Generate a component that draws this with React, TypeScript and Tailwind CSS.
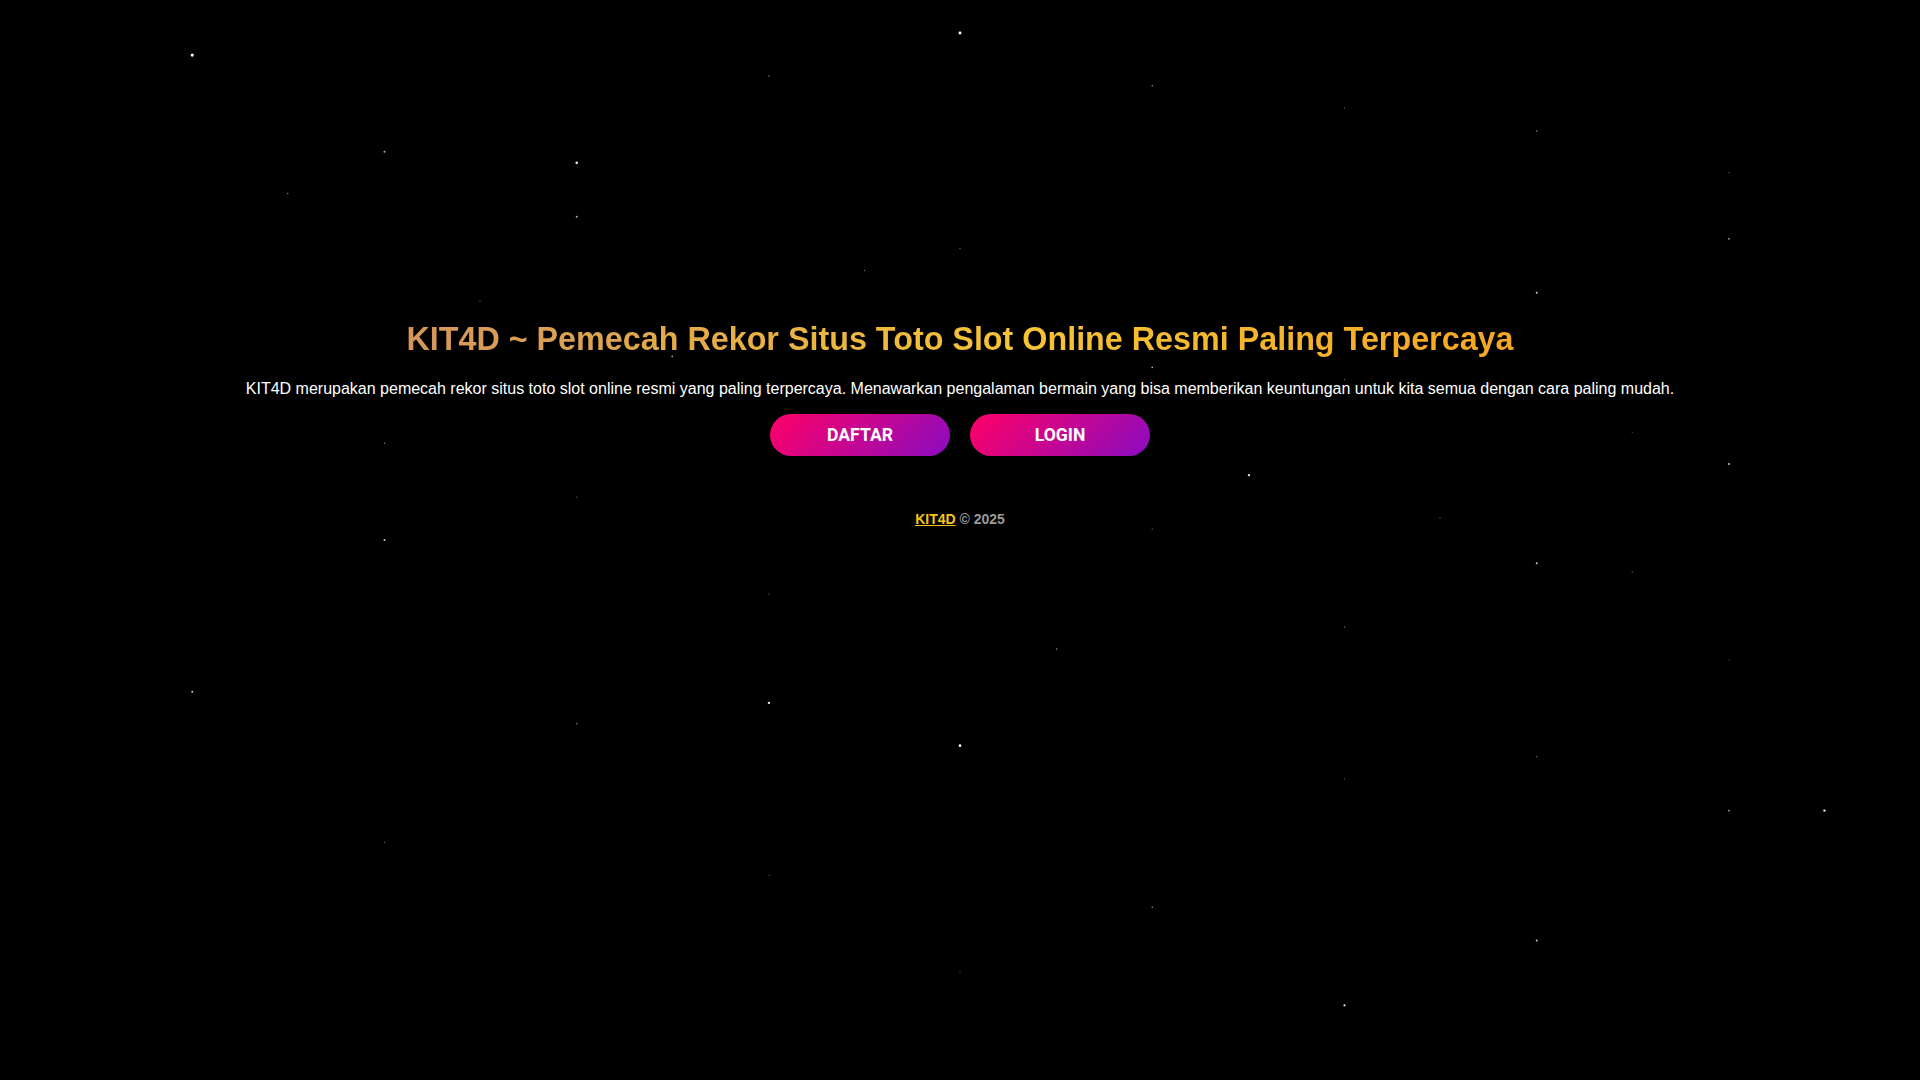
import React from "react";

const stars: [number, number, number, number][] = [
  [157, 45, 1.3, 1], [314, 124, 0.8, 0.7], [471, 133, 1.1, 0.9], [235, 158, 0.6, 0.5], [471, 177, 0.8, 0.7],
  [628, 62, 0.6, 0.5], [784, 27, 1.2, 1], [941, 70, 0.6, 0.6], [1098, 88, 0.5, 0.5], [1255, 107, 0.6, 0.6],
  [1412, 141, 0.5, 0.4], [1412, 195, 0.7, 0.7], [1255, 239, 0.8, 0.8], [784, 203, 0.5, 0.5], [706, 221, 0.6, 0.5],
  [392, 246, 0.5, 0.4], [549, 291, 0.7, 0.7], [941, 300, 0.7, 0.7], [1098, 310, 0.5, 0.5], [314, 362, 0.6, 0.5],
  [1020, 388, 1, 0.9], [1412, 379, 0.8, 0.8], [1333, 353, 0.5, 0.4], [471, 406, 0.5, 0.4], [941, 432, 0.5, 0.4],
  [1176, 423, 0.5, 0.4], [314, 441, 0.8, 0.8], [1255, 460, 0.8, 0.8], [1333, 467, 0.5, 0.5], [628, 485, 0.5, 0.4],
  [1098, 512, 0.5, 0.5], [863, 530, 0.6, 0.6], [1412, 539, 0.5, 0.4], [157, 565, 0.8, 0.8], [628, 574, 1, 0.9],
  [471, 591, 0.6, 0.5], [784, 609, 1.1, 1], [1255, 618, 0.5, 0.5], [1098, 636, 0.5, 0.4], [1412, 662, 0.7, 0.7],
  [1490, 662, 1, 0.9], [314, 688, 0.5, 0.4], [628, 715, 0.5, 0.4], [941, 741, 0.6, 0.6], [1255, 768, 0.8, 0.8],
  [784, 794, 0.5, 0.4], [1098, 821, 0.9, 0.9],
];

function StarField() {
  return (
    <svg
      className="pointer-events-none absolute inset-0 h-full w-full"
      viewBox="0 0 1568 882"
      preserveAspectRatio="none"
      aria-hidden="true"
    >
      {stars.map(([x, y, r, o], i) => (
        <circle key={i} cx={x} cy={y} r={r} fill="#ffffff" opacity={o} />
      ))}
    </svg>
  );
}

export default function App() {
  return (
    <div
      className="relative min-h-screen w-full overflow-hidden bg-black"
      style={{ fontFamily: '"Liberation Sans", Arial, sans-serif' }}
    >
      <StarField />
      <div className="relative flex flex-col items-center pt-[320px]">
        <h1 className="bg-[linear-gradient(to_right,#d4955c,#f6c434_55%,#f5a623)] bg-clip-text text-[32.3px] font-bold leading-[38px] text-transparent">
          KIT4D ~ Pemecah Rekor Situs Toto Slot Online Resmi Paling Terpercaya
        </h1>
        <p className="mt-[19px] text-[16px] leading-[24px] text-white">
          KIT4D merupakan pemecah rekor situs toto slot online resmi yang paling terpercaya. Menawarkan pengalaman bermain yang bisa memberikan keuntungan untuk kita semua dengan cara paling mudah.
        </p>
        <div className="mt-[13px] flex gap-[20px]">
          <a
            href="#"
            className="flex h-[42px] w-[180px] items-center justify-center rounded-full bg-[linear-gradient(135deg,#ff0066,#8a0cc0)] text-[17.6px] font-bold text-white"
            style={{ fontFamily: 'Roboto, "Liberation Sans", sans-serif' }}
          >
            DAFTAR
          </a>
          <a
            href="#"
            className="flex h-[42px] w-[180px] items-center justify-center rounded-full bg-[linear-gradient(135deg,#ff0066,#8a0cc0)] text-[17.6px] font-bold text-white"
            style={{ fontFamily: 'Roboto, "Liberation Sans", sans-serif' }}
          >
            LOGIN
          </a>
        </div>
        <footer className="mt-[53px] text-[14px] font-bold leading-[21px] text-[#999999]">
          <a href="#" className="text-[#f5c518] underline">KIT4D</a> © 2025
        </footer>
      </div>
    </div>
  );
}
